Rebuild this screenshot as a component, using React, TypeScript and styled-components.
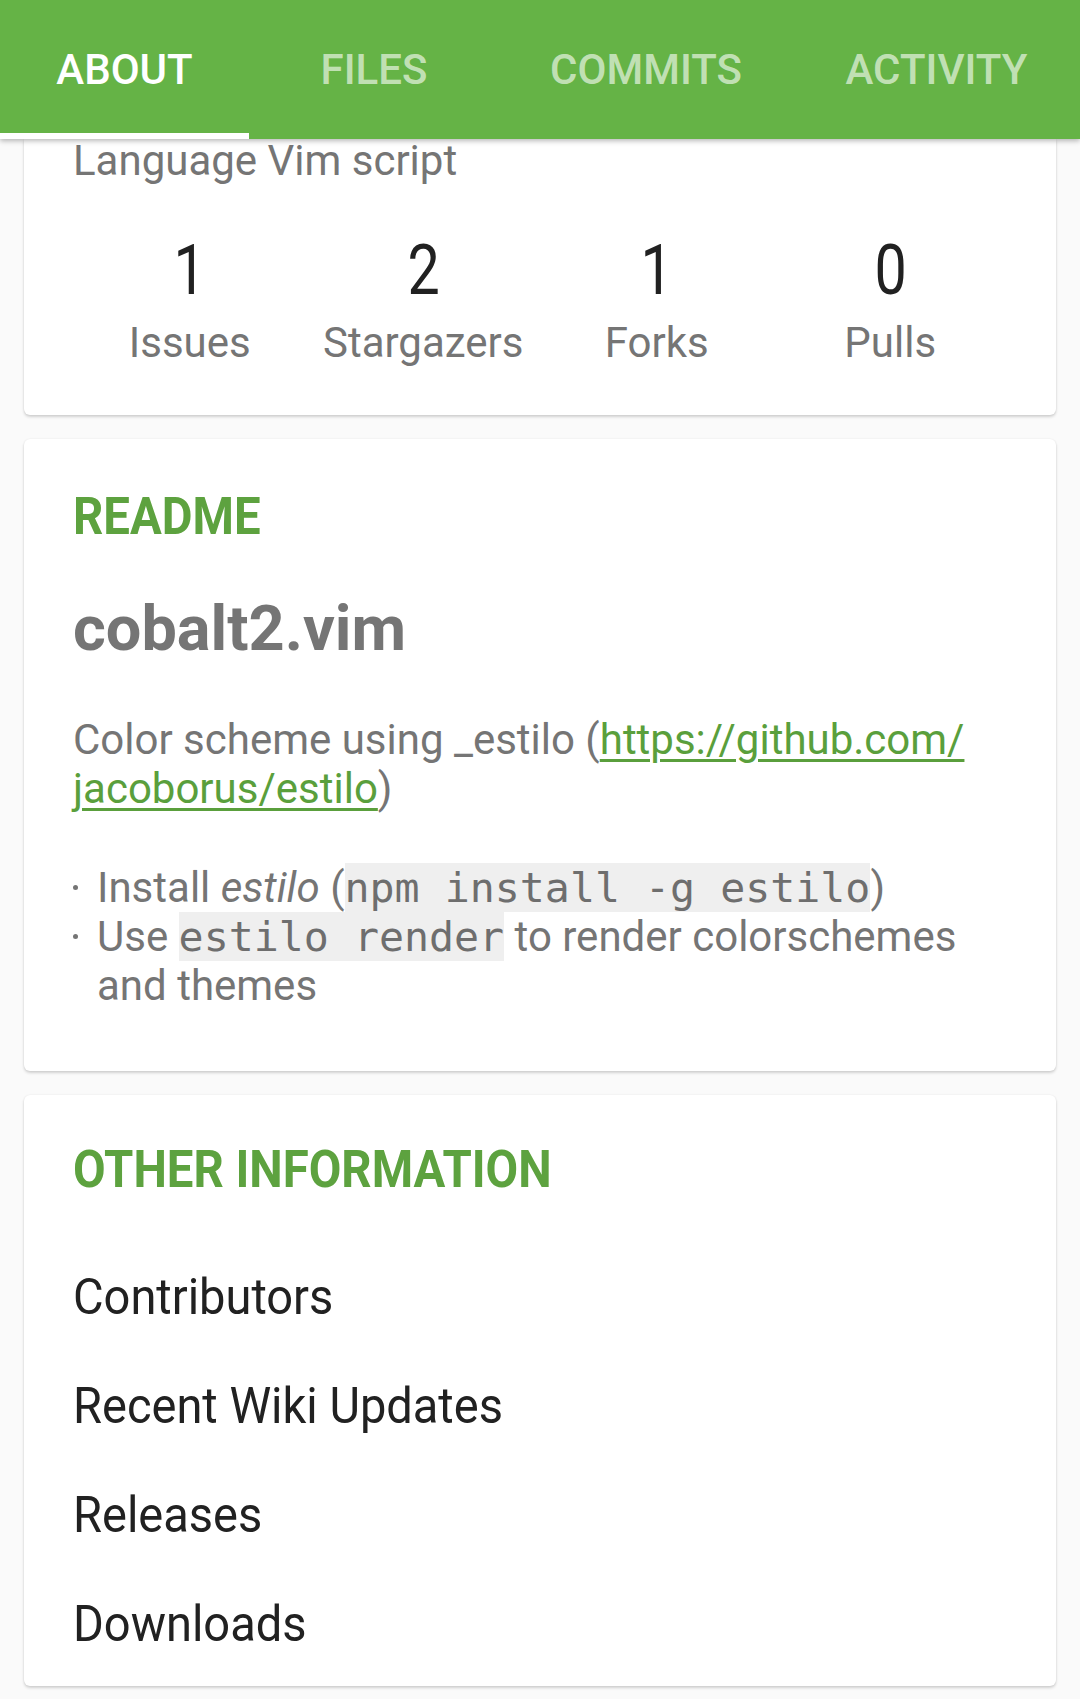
import React from "react";
import styled, { createGlobalStyle } from "styled-components";

const GlobalStyle = createGlobalStyle`
  html, body {
    margin: 0;
    padding: 0;
    background: #fafafa;
    font-family: Roboto, "Noto Sans", sans-serif;
  }
  #root {
    min-height: 1699px;
  }
`;

const Page = styled.div`
  width: 1080px;
  height: 1699px;
  overflow: hidden;
  background: #fafafa;
  display: flex;
  flex-direction: column;
`;

const TabBar = styled.nav`
  position: relative;
  z-index: 2;
  flex: 0 0 139px;
  height: 139px;
  background: #65b346;
  display: grid;
  grid-template-columns: 249px 250px 294px 287px;
  box-shadow: 0 2px 5px rgba(0, 0, 0, 0.28);
`;

const Tab = styled.div<{ $active?: boolean }>`
  position: relative;
  display: flex;
  align-items: center;
  justify-content: center;
  font-family: Roboto, sans-serif;
  font-weight: 500;
  font-size: 42px;
  text-transform: uppercase;
  color: ${(p) => (p.$active ? "#ffffff" : "rgba(255,255,255,0.62)")};
  &::after {
    content: "";
    display: ${(p) => (p.$active ? "block" : "none")};
    position: absolute;
    left: 0;
    right: 0;
    bottom: 0;
    height: 6px;
    background: #ffffff;
  }
`;

const Content = styled.main`
  display: flex;
  flex-direction: column;
  gap: 24px;
  padding: 0 24px;
`;

const Card = styled.section<{ $top?: number; $bottom?: number; $flat?: boolean }>`
  background: #ffffff;
  border-radius: ${(p) => (p.$flat ? "0 0 6px 6px" : "6px")};
  box-shadow: 0 2px 3px rgba(0, 0, 0, 0.16), 0 0 2px rgba(0, 0, 0, 0.08);
  padding: ${(p) => p.$top ?? 0}px 49px ${(p) => p.$bottom ?? 0}px;
  display: flex;
  flex-direction: column;
`;

const LanguageLine = styled.div`
  font-size: 42px;
  line-height: 44px;
  color: #757575;
`;

const Stats = styled.div`
  display: grid;
  grid-template-columns: repeat(4, 1fr);
  margin-top: 47px;
`;

const Stat = styled.div`
  display: flex;
  flex-direction: column;
  align-items: center;
`;

const StatNumber = styled.div`
  font-size: 70px;
  line-height: 80px;
  color: #212121;
  transform: scaleX(0.82);
  transform-origin: center;
`;

const StatLabel = styled.div`
  font-size: 42px;
  line-height: 48px;
  margin-top: 9px;
  color: #757575;
`;

const SectionTitle = styled.h2`
  margin: 0;
  align-self: flex-start;
  font-size: 52px;
  line-height: 56px;
  font-weight: 700;
  color: #5da23f;
  text-transform: uppercase;
  white-space: nowrap;
  transform: scaleX(0.91);
  transform-origin: left center;
`;

const RepoTitle = styled.h1`
  margin: 48px 0 0;
  font-size: 63px;
  line-height: 72px;
  font-weight: 700;
  color: #757575;
`;

const Paragraph = styled.p`
  margin: 50px 0 0;
  font-size: 42px;
  line-height: 49px;
  color: #757575;
`;

const Link = styled.a`
  color: #5a9f3c;
  text-decoration: underline;
  text-decoration-thickness: 3px;
  text-underline-offset: 5px;
`;

const List = styled.ul`
  margin: 50px 0 0;
  padding: 0;
  list-style: none;
  font-size: 42px;
  line-height: 49px;
  color: #757575;
`;

const Item = styled.li`
  display: flex;
`;

const Bullet = styled.span`
  flex: 0 0 24px;
  height: 49px;
  display: flex;
  align-items: center;
  &::before {
    content: "";
    width: 5px;
    height: 5px;
    border-radius: 50%;
    background: #757575;
  }
`;

const ItemText = styled.span`
  flex: 1;
`;

const Code = styled.code`
  font-family: "DejaVu Sans Mono", "Liberation Mono", monospace;
  font-size: 41.6px;
  background: #efefef;
  color: #6e6e6e;
`;

const InfoList = styled.div`
  display: flex;
  flex-direction: column;
  margin-top: 44px;
`;

const InfoRow = styled.div`
  height: 109px;
  display: flex;
  align-items: center;
`;

const InfoLabel = styled.span`
  font-size: 50px;
  color: #212121;
  white-space: nowrap;
  transform: scaleX(0.94);
  transform-origin: left center;
`;

const stats = [
  { n: 1, label: "Issues" },
  { n: 2, label: "Stargazers" },
  { n: 1, label: "Forks" },
  { n: 0, label: "Pulls" },
];

const tabs = ["About", "Files", "Commits", "Activity"];
const info = ["Contributors", "Recent Wiki Updates", "Releases", "Downloads"];

export default function App() {
  return (
    <>
      <GlobalStyle />
      <Page>
        <TabBar>
          {tabs.map((t, i) => (
            <Tab key={t} $active={i === 0}>
              {t}
            </Tab>
          ))}
        </TabBar>
        <Content>
          <Card $flat $bottom={48}>
            <LanguageLine>Language Vim script</LanguageLine>
            <Stats>
              {stats.map((s) => (
                <Stat key={s.label}>
                  <StatNumber>{s.n}</StatNumber>
                  <StatLabel>{s.label}</StatLabel>
                </Stat>
              ))}
            </Stats>
          </Card>
          <Card $top={50} $bottom={61}>
            <SectionTitle>Readme</SectionTitle>
            <RepoTitle>cobalt2.vim</RepoTitle>
            <Paragraph>
              Color scheme using _estilo (
              <Link href="#">https://github.com/ jacoborus/estilo</Link>)
            </Paragraph>
            <List>
              <Item>
                <Bullet />
                <ItemText>
                  Install <em>estilo</em> (<Code>npm install -g estilo</Code>)
                </ItemText>
              </Item>
              <Item>
                <Bullet />
                <ItemText>
                  Use <Code>estilo render</Code> to render colorschemes and themes
                </ItemText>
              </Item>
            </List>
          </Card>
          <Card $top={47} $bottom={8}>
            <SectionTitle>Other Information</SectionTitle>
            <InfoList>
              {info.map((x) => (
                <InfoRow key={x}>
                  <InfoLabel>{x}</InfoLabel>
                </InfoRow>
              ))}
            </InfoList>
          </Card>
        </Content>
      </Page>
    </>
  );
}
